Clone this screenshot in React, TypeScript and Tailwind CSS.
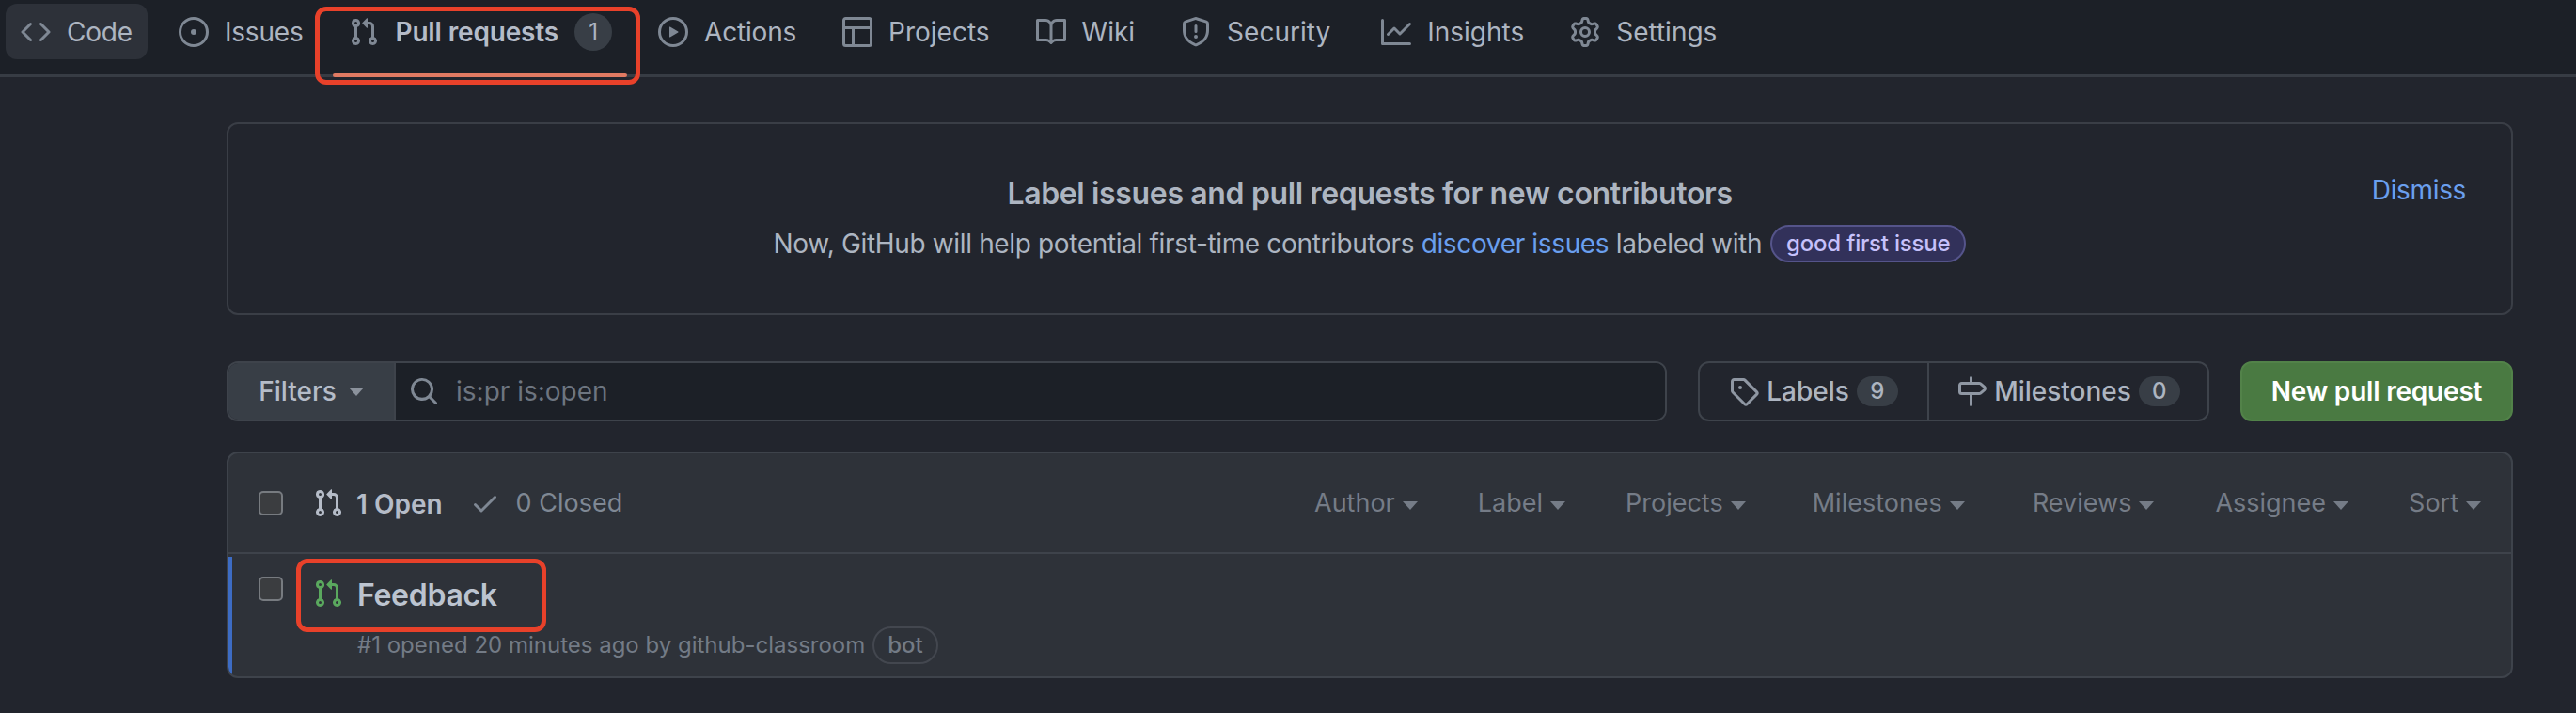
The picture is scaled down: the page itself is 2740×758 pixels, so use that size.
const paths = {
  code: ["m11.28 3.22 4.25 4.25a.75.75 0 0 1 0 1.06l-4.25 4.25a.749.749 0 0 1-1.275-.326.749.749 0 0 1 .215-.734L13.94 8l-3.72-3.72a.749.749 0 0 1 .326-1.275.749.749 0 0 1 .734.215Zm-6.56 0a.751.751 0 0 1 1.042.018.751.751 0 0 1 .018 1.042L2.06 8l3.72 3.72a.749.749 0 0 1-.326 1.275.749.749 0 0 1-.734-.215L.47 8.53a.75.75 0 0 1 0-1.06Z"],
  issue: ["M8 9.5a1.5 1.5 0 1 0 0-3 1.5 1.5 0 0 0 0 3Z", "M8 0a8 8 0 1 1 0 16A8 8 0 0 1 8 0ZM1.5 8a6.5 6.5 0 1 0 13 0 6.5 6.5 0 0 0-13 0Z"],
  pull: ["M1.5 3.25a2.25 2.25 0 1 1 3 2.122v5.256a2.251 2.251 0 1 1-1.5 0V5.372A2.25 2.25 0 0 1 1.5 3.25Zm5.677-.177L9.573.677A.25.25 0 0 1 10 .854V2.5h1A2.5 2.5 0 0 1 13.5 5v5.628a2.251 2.251 0 1 1-1.5 0V5a1 1 0 0 0-1-1h-1v1.646a.25.25 0 0 1-.427.177L7.177 3.427a.25.25 0 0 1 0-.354ZM3.75 2.5a.75.75 0 1 0 0 1.5.75.75 0 0 0 0-1.5Zm0 9.5a.75.75 0 1 0 0 1.5.75.75 0 0 0 0-1.5Zm8.25.75a.75.75 0 1 0 1.5 0 .75.75 0 0 0-1.5 0Z"],
  play: ["M8 0a8 8 0 1 1 0 16A8 8 0 0 1 8 0ZM1.5 8a6.5 6.5 0 1 0 13 0 6.5 6.5 0 0 0-13 0Zm4.879-2.773 4.264 2.559a.25.25 0 0 1 0 .428l-4.264 2.559A.25.25 0 0 1 6 10.559V5.442a.25.25 0 0 1 .379-.215Z"],
  table: ["M0 1.75C0 .784.784 0 1.75 0h12.5C15.216 0 16 .784 16 1.75v12.5A1.75 1.75 0 0 1 14.25 16H1.75A1.75 1.75 0 0 1 0 14.25ZM6.5 6.5v8h7.75a.25.25 0 0 0 .25-.25V6.5Zm8-1.5V1.75a.25.25 0 0 0-.25-.25H1.75a.25.25 0 0 0-.25.25V5Zm-13 1.5v7.75c0 .138.112.25.25.25H5v-8Z"],
  book: ["M0 1.75A.75.75 0 0 1 .75 1h4.253c1.227 0 2.317.59 3 1.501A3.743 3.743 0 0 1 11.006 1h4.245a.75.75 0 0 1 .75.75v10.5a.75.75 0 0 1-.75.75h-4.507a2.25 2.25 0 0 0-1.591.659l-.622.621a.75.75 0 0 1-1.06 0l-.622-.621A2.25 2.25 0 0 0 5.258 13H.75a.75.75 0 0 1-.75-.75Zm7.251 10.324.004-5.073-.002-2.253A2.25 2.25 0 0 0 5.003 2.5H1.5v9h3.757a3.75 3.75 0 0 1 1.994.574ZM8.755 4.75l-.004 7.322a3.752 3.752 0 0 1 1.992-.572H14.5v-9h-3.495a2.25 2.25 0 0 0-2.25 2.25Z"],
  shield: ["M7.467.133a1.748 1.748 0 0 1 1.066 0l5.25 1.68A1.75 1.75 0 0 1 15 3.48V7c0 1.566-.32 3.182-1.303 4.682-.983 1.498-2.585 2.813-5.032 3.855a1.697 1.697 0 0 1-1.33 0c-2.447-1.042-4.049-2.357-5.032-3.855C1.32 10.182 1 8.566 1 7V3.48a1.75 1.75 0 0 1 1.217-1.667Zm.61 1.429a.25.25 0 0 0-.153 0l-5.25 1.68a.25.25 0 0 0-.174.238V7c0 1.358.275 2.666 1.057 3.86.784 1.194 2.121 2.34 4.366 3.297a.196.196 0 0 0 .154 0c2.245-.956 3.582-2.104 4.366-3.298C13.225 9.666 13.5 8.36 13.5 7V3.48a.251.251 0 0 0-.174-.237l-5.25-1.68ZM8.75 4.75v3a.75.75 0 0 1-1.5 0v-3a.75.75 0 0 1 1.5 0ZM9 10.5a1 1 0 1 1-2 0 1 1 0 0 1 2 0Z"],
  graph: ["M1.5 1.75V13.5h13.75a.75.75 0 0 1 0 1.5H.75a.75.75 0 0 1-.75-.75V1.75a.75.75 0 0 1 1.5 0Zm14.28 2.53-5.25 5.25a.75.75 0 0 1-1.06 0L7 7.06 4.28 9.78a.751.751 0 0 1-1.042-.018.751.751 0 0 1-.018-1.042l3.25-3.25a.75.75 0 0 1 1.06 0L10 7.94l4.72-4.72a.751.751 0 0 1 1.042.018.751.751 0 0 1 .018 1.042Z"],
  gear: ["M8 0a8.2 8.2 0 0 1 .701.031C9.444.095 9.99.645 10.16 1.29l.288 1.107c.018.066.079.158.212.224.231.114.454.243.668.386.123.082.233.09.299.071l1.103-.303c.644-.176 1.392.021 1.82.63.27.385.506.792.704 1.218.315.675.111 1.422-.364 1.891l-.814.806c-.049.048-.098.147-.088.294.016.257.016.515 0 .772-.01.147.038.246.088.294l.814.806c.475.469.679 1.216.364 1.891a7.977 7.977 0 0 1-.704 1.217c-.428.61-1.176.807-1.82.63l-1.102-.302c-.067-.019-.177-.011-.3.071a5.909 5.909 0 0 1-.668.386c-.133.066-.194.158-.211.224l-.29 1.106c-.168.646-.715 1.196-1.458 1.26a8.006 8.006 0 0 1-1.402 0c-.743-.064-1.289-.614-1.458-1.26l-.289-1.106c-.018-.066-.079-.158-.212-.224a5.738 5.738 0 0 1-.668-.386c-.123-.082-.233-.09-.299-.071l-1.103.303c-.644.176-1.392-.021-1.82-.63a8.12 8.12 0 0 1-.704-1.218c-.315-.675-.111-1.422.363-1.891l.815-.806c.05-.048.098-.147.088-.294a6.214 6.214 0 0 1 0-.772c.01-.147-.038-.246-.088-.294l-.815-.806C.635 6.045.431 5.298.746 4.623a7.92 7.92 0 0 1 .704-1.217c.428-.61 1.176-.807 1.82-.63l1.102.302c.067.019.177.011.3-.071.214-.143.437-.272.668-.386.133-.066.194-.158.211-.224l.29-1.106C6.009.645 6.556.095 7.299.03 7.53.01 7.764 0 8 0Zm-.571 1.525c-.036.003-.108.036-.137.146l-.289 1.105c-.147.561-.549.967-.998 1.189-.173.086-.34.183-.5.29-.417.278-.97.423-1.529.27l-1.103-.303c-.109-.03-.175.016-.195.045-.22.312-.412.644-.573.99-.014.031-.021.11.059.19l.815.806c.411.406.562.957.53 1.456a4.709 4.709 0 0 0 0 .582c.032.499-.119 1.05-.53 1.456l-.815.806c-.081.08-.073.159-.059.19.162.346.353.677.573.989.02.03.085.076.195.046l1.102-.303c.56-.153 1.113-.008 1.53.27.161.107.328.204.501.29.447.222.85.629.997 1.189l.289 1.105c.029.109.101.143.137.146a6.6 6.6 0 0 0 1.142 0c.036-.003.108-.036.137-.146l.289-1.105c.147-.561.549-.967.998-1.189.173-.086.34-.183.5-.29.417-.278.97-.423 1.529-.27l1.103.303c.109.029.175-.016.195-.045.22-.313.411-.644.573-.99.014-.031.021-.11-.059-.19l-.815-.806c-.411-.406-.562-.957-.53-1.456a4.709 4.709 0 0 0 0-.582c-.032-.499.119-1.05.53-1.456l.815-.806c.081-.08.073-.159.059-.19a6.464 6.464 0 0 0-.573-.989c-.02-.03-.085-.076-.195-.046l-1.102.303c-.56.153-1.113.008-1.53-.27a4.44 4.44 0 0 0-.501-.29c-.447-.222-.85-.629-.997-1.189l-.289-1.105c-.029-.11-.101-.143-.137-.146a6.6 6.6 0 0 0-1.142 0ZM11 8a3 3 0 1 1-6 0 3 3 0 0 1 6 0ZM9.5 8a1.5 1.5 0 1 0-3.001.001A1.5 1.5 0 0 0 9.5 8Z"],
  tag: ["M1 7.775V2.75C1 1.784 1.784 1 2.75 1h5.025c.464 0 .91.184 1.238.513l6.25 6.25a1.75 1.75 0 0 1 0 2.474l-5.026 5.026a1.75 1.75 0 0 1-2.474 0l-6.25-6.25A1.75 1.75 0 0 1 1 7.775Zm1.5 0c0 .066.026.13.073.177l6.25 6.25a.25.25 0 0 0 .354 0l5.025-5.025a.25.25 0 0 0 0-.354l-6.25-6.25a.25.25 0 0 0-.177-.073H2.75a.25.25 0 0 0-.25.25ZM6 5a1 1 0 1 1 0 2 1 1 0 0 1 0-2Z"],
  milestone: ["M7.75 0a.75.75 0 0 1 .75.75V3h3.634c.414 0 .814.147 1.13.414l2.07 1.75a1.75 1.75 0 0 1 0 2.672l-2.07 1.75a1.75 1.75 0 0 1-1.13.414H8.5v5.25a.75.75 0 0 1-1.5 0V10H2.75A1.75 1.75 0 0 1 1 8.25v-3.5C1 3.784 1.784 3 2.75 3H7V.75A.75.75 0 0 1 7.75 0Zm4.384 8.5a.25.25 0 0 0 .161-.06l2.07-1.75a.248.248 0 0 0 0-.38l-2.07-1.75a.25.25 0 0 0-.161-.06H2.75a.25.25 0 0 0-.25.25v3.5c0 .138.112.25.25.25h9.384Z"],
  check: ["M13.78 4.22a.75.75 0 0 1 0 1.06l-7.25 7.25a.75.75 0 0 1-1.06 0L2.22 9.28a.751.751 0 0 1 .018-1.042.751.751 0 0 1 1.042-.018L6 10.94l6.72-6.72a.75.75 0 0 1 1.06 0Z"],
  search: ["M10.68 11.74a6 6 0 0 1-7.922-8.982 6 6 0 0 1 8.982 7.922l3.04 3.04a.749.749 0 0 1-.326 1.275.749.749 0 0 1-.734-.215ZM11.5 7a4.499 4.499 0 1 0-8.997 0A4.499 4.499 0 0 0 11.5 7Z"],
};

function Octicon({ name, className }: { name: keyof typeof paths; className: string }) {
  return (
    <svg viewBox="0 0 16 16" fill="currentColor" className={`shrink-0 ${className}`}>
      {paths[name].map((d) => (
        <path key={d} d={d} />
      ))}
    </svg>
  );
}

const tabs: { label: string; icon: keyof typeof paths; text?: string; extra?: string; active?: boolean; count?: string; selected?: boolean }[] = [
  { label: "Code", icon: "code", active: true, text: "tracking-[-0.2px]" },
  { label: "Issues", icon: "issue", text: "tracking-[-0.2px]" },
  { label: "Pull requests", icon: "pull", count: "1", selected: true, text: "font-semibold text-[#b5bcc8] tracking-[-0.15px]" },
  { label: "Actions", icon: "play", text: "tracking-[-0.2px]" },
  { label: "Projects", icon: "table" },
  { label: "Wiki", icon: "book" },
  { label: "Security", icon: "shield" },
  { label: "Insights", icon: "graph", extra: "ml-[5px]" },
  { label: "Settings", icon: "gear" },
];

const sorters = [
  { name: "Author", gap: "" },
  { name: "Label", gap: "ml-[64px]" },
  { name: "Projects", gap: "ml-[64px]" },
  { name: "Milestones", gap: "ml-[71px]" },
  { name: "Reviews", gap: "ml-[72px]" },
  { name: "Assignee", gap: "ml-[65px]" },
  { name: "Sort", gap: "ml-[64px]" },
];

function Caret({ className }: { className: string }) {
  return <span className={`inline-block w-0 h-0 border-x-[8px] border-x-transparent border-t-[9px] ${className}`} />;
}

function Checkbox() {
  return <span className="block shrink-0 w-[26px] h-[26px] rounded-[5px] border-[2px] border-[#777b80] bg-[#3b3d40]" />;
}

function RedBox({ className }: { className: string }) {
  return <span className={`absolute border-[5px] border-[#e8412a] rounded-[12px] pointer-events-none ${className}`} />;
}

export default function App() {
  return (
    <div className="w-[2740px] h-[758px] overflow-hidden bg-[#22252d] text-[28px] text-[#adb5c1] font-['Inter','Liberation_Sans',sans-serif]">
      <nav className="h-[82px] bg-[#1c2027] border-b-[3px] border-[#373c44] pl-[6px] flex items-start gap-[17px]">
        {tabs.map((tab) => (
          <div
            key={tab.label}
            className={`relative mt-[4px] h-[59px] px-4 flex items-center gap-[17px] rounded-[12px] ${tab.active ? "bg-[#2d3139]" : ""} ${tab.extra ?? ""}`}
          >
            <Octicon name={tab.icon} className="w-8 h-8 text-[#7f8894]" />
            <span className={tab.text}>{tab.label}</span>
            {tab.count && (
              <span className="w-[40px] h-[40px] rounded-full bg-[#383e46] flex items-center justify-center text-[24px]">
                {tab.count}
              </span>
            )}
            {tab.selected && (
              <>
                <span className="absolute left-[-1px] right-0 top-[74px] h-[4px] rounded-full bg-[#e07a62]" />
                <RedBox className="left-[-20px] right-[-14px] top-[3px] h-[83px]" />
              </>
            )}
          </div>
        ))}
      </nav>

      <main className="ml-[241px] w-[2432px]">
        <section className="relative mt-[48px] h-[205px] rounded-[12px] border-[2px] border-[#3a3e46] flex flex-col items-center pt-[54px] tracking-[-0.35px]">
          <h2 className="text-[32px] leading-[40px] font-semibold text-[#adb5c1]">Label issues and pull requests for new contributors</h2>
          <p className="mt-[13px] leading-[40px] flex items-center">
            Now, GitHub will help potential first-time contributors&nbsp;
            <a className="text-[#6a9fee]">discover issues</a>
            &nbsp;labeled with
            <span className="ml-[9px] h-[40px] px-[15px] rounded-full bg-[#32315a] border-[2px] border-[#55548a] text-[#c6c1fb] text-[24px] font-medium leading-[36px] tracking-[-0.2px]">
              good first issue
            </span>
          </p>
          <a className="absolute right-[48px] top-[50px] text-[#6a9fee] leading-[40px]">Dismiss</a>
        </section>

        <div className="mt-[49px] flex items-stretch h-[64px]">
          <div className="flex-1 flex rounded-[12px] border-[2px] border-[#3e434b] overflow-hidden">
            <button className="w-[178px] bg-[#383e46] border-r-[2px] border-[#3e434b] flex items-center justify-center gap-[13px] font-medium text-[#b5bcc8]">
              Filters
              <Caret className="border-t-[#8b929c]" />
            </button>
            <div className="flex-1 bg-[#1c2027] flex items-center gap-[18px] pl-[14px] text-[#6d7580]">
              <Octicon name="search" className="w-8 h-8 text-[#7f8894]" />
              is:pr is:open
            </div>
          </div>

          <div className="ml-[33px] w-[544px] flex rounded-[12px] border-[2px] border-[#3e434b] font-medium">
            <div className="w-[244px] border-r-[2px] border-[#3e434b] flex items-center justify-center gap-[8px]">
              <Octicon name="tag" className="w-8 h-8 text-[#8f97a3]" />
              Labels
              <span className="w-[44px] h-[32px] rounded-full bg-[#383e46] flex items-center justify-center text-[24px]">9</span>
            </div>
            <div className="flex-1 flex items-center justify-center gap-[8px]">
              <Octicon name="milestone" className="w-8 h-8 text-[#8f97a3]" />
              Milestones
              <span className="w-[44px] h-[32px] rounded-full bg-[#383e46] flex items-center justify-center text-[24px]">0</span>
            </div>
          </div>

          <button className="ml-[33px] w-[290px] rounded-[12px] border-[2px] border-[#528249] bg-[#4a7a42] text-white font-semibold tracking-[-0.2px]">
            New pull request
          </button>
        </div>

        <section className="mt-[32px] h-[241px] rounded-[12px] border-[2px] border-[#3e434b] bg-[#2e3239] overflow-hidden">
          <header className="h-[107px] border-b-[2px] border-[#3e434b] flex items-center pl-[32px] pr-[32px]">
            <Checkbox />
            <Octicon name="pull" className="ml-[32px] w-8 h-8 text-[#b5bcc8]" />
            <span className="ml-[14px] mt-[2px] font-semibold text-[#b5bcc8]">1 Open</span>
            <Octicon name="check" className="ml-[29px] w-8 h-8 text-[#7f8894]" />
            <span className="ml-[17px] mt-[2px] text-[27px] text-[#7f8894]">0 Closed</span>
            <div className="ml-auto mt-[2px] flex items-center text-[27px] text-[#757c87]">
              {sorters.map((s) => (
                <span key={s.name} className={`flex items-center gap-[8px] ${s.gap}`}>
                  {s.name}
                  <Caret className="mt-[3px] border-t-[#757c87]" />
                </span>
              ))}
            </div>
          </header>
          <div className="relative h-[130px] pt-[24px] pl-[32px] flex items-start">
            <span className="absolute left-0 top-[3px] bottom-0 w-[4px] bg-[#3d6cc4]" />
            <Checkbox />
            <Octicon name="pull" className="ml-[32px] mt-[2px] w-8 h-8 text-[#5aa85e]" />
            <div className="relative ml-[15px]">
              <h3 className="text-[32px] leading-[40px] font-semibold text-[#bcc4d0] tracking-[-0.3px]">Feedback</h3>
              <p className="mt-[13px] text-[24px] leading-[40px] text-[#737b86] flex items-center">
                #1 opened 20 minutes ago by github-classroom
                <span className="ml-[8px] h-[40px] px-[14px] rounded-full border-[2px] border-[#43474f] font-medium leading-[36px]">bot</span>
              </p>
              <RedBox className="left-[-65px] top-[-19px] w-[266px] h-[78px]" />
            </div>
          </div>
        </section>
      </main>
    </div>
  );
}
